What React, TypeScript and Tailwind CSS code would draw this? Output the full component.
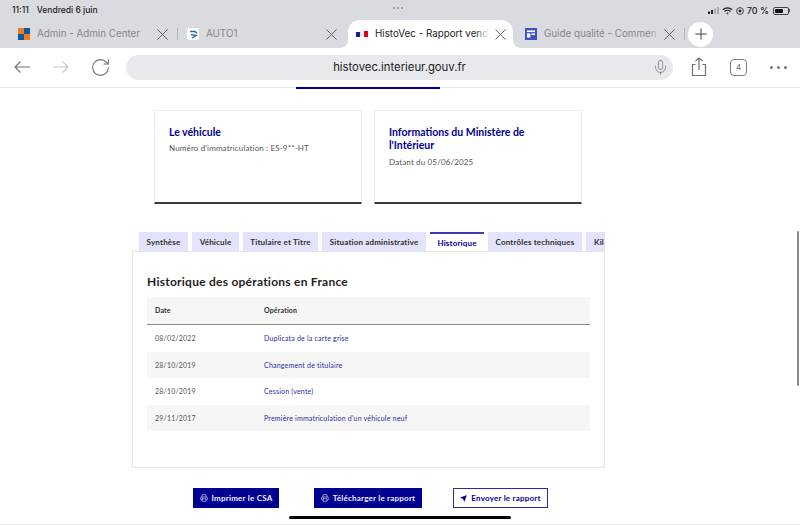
import { Mic, Plus, RotateCw, Send, X, Printer } from 'lucide-react';

const font = "font-['Inter','Liberation_Sans',sans-serif]";
const page = "font-['Lato','Liberation_Sans',sans-serif]";

const Tab = ({ icon, title, active, fade, sep }: { icon: React.ReactNode; title: string; active?: boolean; fade?: boolean; sep?: boolean }) => (
  <div className={`relative flex h-[28px] items-center pl-[8px] ${active ? 'mr-[4px] w-[165px] rounded-t-[12px] bg-white pr-[3px]' : 'w-[169px] pr-[7px]'}`}>
    {active && (
      <>
        <div className="absolute bottom-0 left-[-8px] h-[8px] w-[8px] bg-white">
          <div className="h-full w-full rounded-br-[8px] bg-[#d9dbe0]" />
        </div>
        <div className="absolute bottom-0 right-[-8px] h-[8px] w-[8px] bg-white">
          <div className="h-full w-full rounded-bl-[8px] bg-[#d9dbe0]" />
        </div>
      </>
    )}
    <div className="flex w-[12px] shrink-0 items-center justify-center">{icon}</div>
    <div className={`ml-[7px] flex-1 overflow-hidden whitespace-nowrap text-[9.8px] ${active ? 'text-[#1c1c1e]' : 'text-[#85878c]'}`}>
      {title}
    </div>
    {fade && <div className={`absolute right-[24px] h-[14px] w-[14px] bg-gradient-to-r from-transparent ${active ? 'to-white' : 'to-[#d9dbe0]'}`} />}
    <X size={19} strokeWidth={1.15} className="shrink-0 text-[#55575c]" />
    {sep && <div className="absolute right-[1px] top-[8px] h-[12px] w-[1px] bg-[#b4b6ba]" />}
  </div>
);

const CardBox = ({ title, sub }: { title: string; sub: string }) => (
  <div className="h-[94px] w-[208px] border border-[#eeeeee] border-b-[2px] border-b-[#3a3a3a] px-[14px] pt-[15px]">
    <div className="text-[10.5px] font-bold leading-[13.4px] text-[#000091]">{title}</div>
    <div className="mt-[3px] text-[8px] leading-[13px] tracking-[0.15px] text-[#555]">{sub}</div>
  </div>
);

const tabs = [
  { label: 'Synthèse', w: 'w-[49px]' },
  { label: 'Véhicule', w: 'w-[47px]' },
  { label: 'Titulaire et Titre', w: 'w-[75px]' },
  { label: 'Situation administrative', w: 'w-[104px]' },
];

const rows = [
  { date: '08/02/2022', op: 'Duplicata de la carte grise' },
  { date: '28/10/2019', op: 'Changement de titulaire' },
  { date: '28/10/2019', op: 'Cession (vente)' },
  { date: '29/11/2017', op: "Première immatriculation d'un véhicule neuf" },
];

export default function App() {
  return (
    <div className={`relative h-[525px] w-[800px] overflow-hidden bg-white ${font}`}>
      {/* browser chrome */}
      <div className="h-[48px] bg-[#d9dbe0]">
        <div className="flex h-[20px] items-center justify-between pl-[12px] pr-[10px] pt-[1px]">
          <div className="flex gap-[8px] text-[8.5px] font-medium text-[#1c1c1e]">
            <span>11:11</span>
            <span>Vendredi 6 juin</span>
          </div>
          <div className="flex items-center gap-[3px] text-[9px] font-medium text-[#1c1c1e]">
            <svg width="11" height="7" viewBox="0 0 11 7">
              <rect x="0" y="4.5" width="2" height="2.5" fill="#222" />
              <rect x="3" y="3" width="2" height="4" fill="#222" />
              <rect x="6" y="1.5" width="2" height="5.5" fill="#aaa" />
              <rect x="9" y="0" width="2" height="7" fill="#aaa" />
            </svg>
            <svg width="11" height="8" viewBox="0 0 11 8" fill="none" stroke="#222" strokeWidth="1.2">
              <path d="M.8 2.8a6.8 6.8 0 0 1 9.4 0M2.5 4.5a4.3 4.3 0 0 1 6 0" />
              <path d="M4.2 6a1.9 1.9 0 0 1 2.6 0L5.5 7.6z" fill="#222" stroke="none" />
            </svg>
            <svg width="8" height="8" viewBox="0 0 8 8" fill="none" stroke="#222">
              <circle cx="4" cy="4" r="3.4" strokeWidth="0.8" />
              <circle cx="4" cy="4" r="1.4" fill="#222" stroke="none" />
            </svg>
            <span>70 %</span>
            <div className="ml-[1px] flex items-center">
              <div className="h-[8px] w-[16px] rounded-[2px] border border-[#444] p-[1px]">
                <div className="h-full w-[70%] rounded-[1px] bg-[#111]" />
              </div>
              <div className="h-[3px] w-[1px] bg-[#555]" />
            </div>
          </div>
        </div>
        <div className="flex h-[28px] items-center pl-[10px]">
          <Tab
            sep
            title="Admin - Admin Center"
            icon={
              <div className="grid h-[12px] w-[12px] grid-cols-2 grid-rows-2">
                <div className="bg-[#f47a20]" />
                <div className="bg-[#0f5a94]" />
                <div className="bg-[#0f5a94]" />
                <div className="bg-[#f47a20]" />
              </div>
            }
          />
          <Tab
            title="AUTO1"
            icon={
              <div className="flex h-[12px] w-[12px] items-center justify-center rounded-[2px] bg-white">
                <svg width="9" height="9" viewBox="0 0 9 9" fill="none" stroke="#1d6fa5" strokeWidth="1.4">
                  <path d="M1 1.5h5l2 2M2 4.5l5 1-4 2.5" />
                </svg>
              </div>
            }
          />
          <Tab
            active
            fade
            title="HistoVec - Rapport vend"
            icon={
              <svg width="12" height="6" viewBox="0 0 12 6">
                <path d="M0 1h4v5H0z" fill="#1b1f8a" />
                <path d="M4 1h3v5H4z" fill="#e8e8f0" />
                <path d="M8 0h4v6H8z" fill="#e1000f" />
              </svg>
            }
          />
          <Tab
            fade
            sep
            title="Guide qualité - Commen"
            icon={
              <svg width="12" height="12" viewBox="0 0 12 12">
                <rect width="12" height="12" fill="#3f51c4" />
                <rect x="2" y="2.4" width="8" height="1.7" fill="#fff" />
                <rect x="2" y="5.4" width="3.4" height="4.2" fill="#fff" />
                <rect x="6.4" y="5.4" width="3.6" height="1.6" fill="#fff" />
              </svg>
            }
          />
          <div className="ml-[2px] flex h-[25px] w-[25px] items-center justify-center rounded-full bg-white">
            <Plus size={18} strokeWidth={1.3} className="text-[#3a3c40]" />
          </div>
        </div>
      </div>
      <div className="flex h-[40px] items-center border-b border-[#e8e8e8] pb-[1px]">
        <div className="flex w-[126px] items-center pl-[14px] text-[#6c6e73]">
          <svg width="16" height="12" viewBox="0 0 16 12" fill="none" stroke="currentColor" strokeWidth="1.1">
            <path d="M16 6H1M6.5.5 1 6l5.5 5.5" />
          </svg>
          <svg width="16" height="12" viewBox="0 0 16 12" fill="none" stroke="#c4c6ca" strokeWidth="1.1" className="ml-[23px]">
            <path d="M0 6h15M9.5.5 15 6l-5.5 5.5" />
          </svg>
          <RotateCw size={21} strokeWidth={1.2} className="ml-[21px]" />
        </div>
        <div className="relative flex h-[25px] w-[547px] items-center justify-center rounded-full bg-[#e7e9ec] text-[11.3px] text-[#1c1c1e]">
          histovec.interieur.gouv.fr
          <Mic size={17} strokeWidth={1.1} className="absolute right-[4px] text-[#77797e]" />
        </div>
        <svg width="16" height="20" viewBox="0 0 16 20" fill="none" stroke="#6c6e73" strokeWidth="1.2" className="ml-[18px]">
          <path d="M4.5 7.5H1.5v11h13v-11h-3" />
          <path d="M8 13V1M4.5 4 8 1l3.5 3" />
        </svg>
        <div className="ml-[23px] flex h-[17px] w-[17px] items-center justify-center rounded-[4px] border border-[#7b7d82] text-[8px] text-[#6c6e73]">4</div>
        <div className="ml-[23px] flex gap-[4px]">
          <div className="h-[3px] w-[3px] rounded-full bg-[#77797e]" />
          <div className="h-[3px] w-[3px] rounded-full bg-[#77797e]" />
          <div className="h-[3px] w-[3px] rounded-full bg-[#77797e]" />
        </div>
      </div>

      {/* page */}
      <div className={page}>
        <div className="ml-[296px] h-[2px] w-[144px] -translate-y-[1px] bg-[#000091]" />
        <div className="ml-[154px] mt-[20px] flex gap-[12px]">
          <CardBox title="Le véhicule" sub="Numéro d'immatriculation : ES-9**-HT" />
          <CardBox title="Informations du Ministère de l'Intérieur" sub="Datant du 05/06/2025" />
        </div>

        <div className="relative ml-[139px] mt-[28px] flex h-[19px] w-[466px] gap-[4px] overflow-hidden text-[8px] font-bold tracking-[0.17px] text-[#2f2f2f]">
          {tabs.map((t) => (
            <div key={t.label} className={`${t.w} flex shrink-0 items-center justify-center whitespace-nowrap bg-[#e3e3fd]`}>
              {t.label}
            </div>
          ))}
          <div className="flex w-[54px] shrink-0 items-center justify-center border-t-2 border-[#3b3bbd] bg-white text-[#000091]">Historique</div>
          <div className="flex w-[94px] shrink-0 items-center justify-center whitespace-nowrap bg-[#e3e3fd]">Contrôles techniques</div>
          <div className="flex w-[19px] shrink-0 items-center whitespace-nowrap bg-[#e3e3fd] pl-[8px]">Kil</div>
        </div>

        <div className="ml-[132px] h-[217px] w-[473px] border border-t-0 border-[#e5e5e5] px-[14px]">
          <div className="-mx-[14px] border-t border-[#e5e5e5]" />
          <h2 className="pt-[22px] text-[12px] font-bold leading-[16px] tracking-[0.25px] text-[#1e1e1e]">Historique des opérations en France</h2>
          <div className="mt-[7px] flex h-[28px] items-center border-b border-[#8a8a8a] bg-[#f6f6f6] text-[7px] font-bold tracking-[0.15px] text-[#2f2f2f]">
            <div className="w-[117px] pl-[8px]">Date</div>
            <div>Opération</div>
          </div>
          {rows.map((r, i) => (
            <div key={r.op} className={`flex h-[26.5px] items-center text-[7px] tracking-[0.2px] ${i % 2 ? 'bg-[#f6f6f6]' : 'bg-white'}`}>
              <div className="w-[117px] pl-[8px] text-[#555]">{r.date}</div>
              <div className="text-[#2a2aa8]">{r.op}</div>
            </div>
          ))}
        </div>

        <div className="ml-[193px] mt-[20px] flex h-[20px] text-[8px] font-bold tracking-[0.22px]">
          <div className="flex w-[86px] items-center justify-center gap-[4px] bg-[#000091] text-[#f0f0ff]">
            <Printer size={8} strokeWidth={1.8} />
            Imprimer le CSA
          </div>
          <div className="ml-[35px] flex w-[108px] items-center justify-center gap-[4px] bg-[#000091] text-[#f0f0ff]">
            <Printer size={8} strokeWidth={1.8} />
            Télécharger le rapport
          </div>
          <div className="ml-[31px] flex w-[95px] items-center justify-center gap-[4px] border border-[#2a2aa8] text-[#000091]">
            <Send size={7} fill="#000091" strokeWidth={1} />
            Envoyer le rapport
          </div>
        </div>
      </div>

      {/* system overlays */}
      <div className="absolute left-0 top-[524px] h-[1px] w-full bg-[#e5e5e5]" />
      <div className="absolute left-[289px] top-[516px] h-[3px] w-[222px] rounded-full bg-black" />
      <div className="absolute left-[797px] top-[231px] h-[155px] w-[2px] rounded-full bg-[#8a8a8a]" />
      <div className="absolute left-[393px] top-[7px] flex gap-[2px]">
        <div className="h-[2px] w-[2px] rounded-full bg-[#8d8f94]" />
        <div className="h-[2px] w-[2px] rounded-full bg-[#8d8f94]" />
        <div className="h-[2px] w-[2px] rounded-full bg-[#8d8f94]" />
      </div>
    </div>
  );
}
